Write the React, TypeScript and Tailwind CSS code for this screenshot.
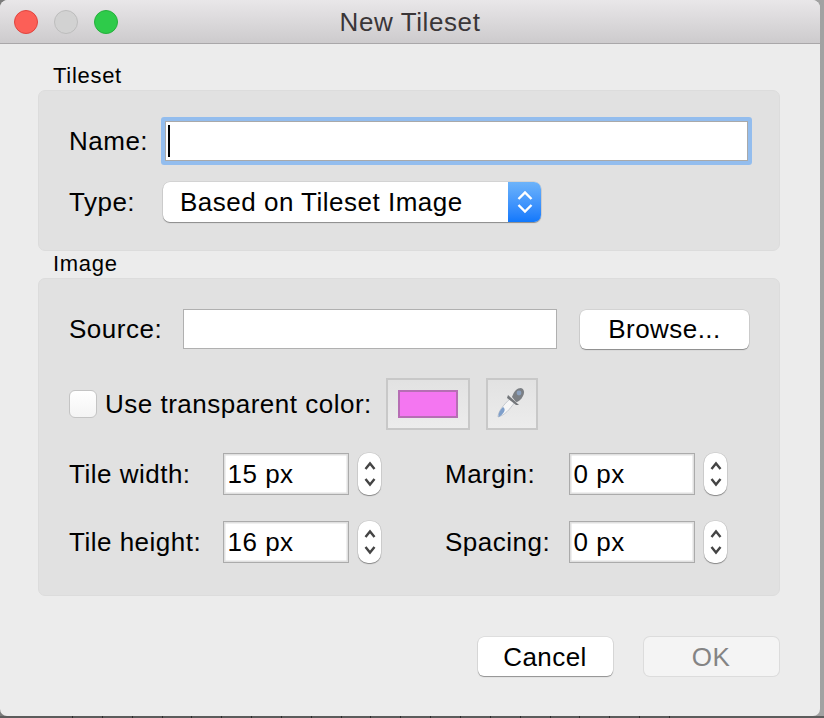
import React from "react";

const ctl = "shadow-[0_1px_1px_rgba(0,0,0,0.35),0_0_0_0.5px_rgba(0,0,0,0.12)]";
const txt = "text-[26px] tracking-[0.5px] text-black whitespace-nowrap pt-[1px]";
const group = "text-[22px] leading-[24px] tracking-[0.7px] text-black";
const ticks = Array.from({ length: 21 }, (_, i) => i);

function SelectChevrons() {
  return (
    <svg width={16} height={26} viewBox="0 0 16 26" fill="none" stroke="#fff" strokeWidth="2.4">
      <path d="M1.5 10 L8 3.5 L14.5 10" />
      <path d="M1.5 16 L8 22.5 L14.5 16" />
    </svg>
  );
}

function SpinChevrons() {
  return (
    <svg width={12} height={26} viewBox="0 0 12 26" fill="none" stroke="#444" strokeWidth="2.4">
      <path d="M1.5 8 L6 2.5 L10.5 8" />
      <path d="M1.5 18 L6 23.5 L10.5 18" />
    </svg>
  );
}

function SpinField({ value }: { value: string }) {
  return (
    <div className="flex items-center gap-[9px]">
      <div className={`w-[126px] h-[42px] border-[1.5px] border-[#ababab] bg-white shadow-[inset_0_0_0_1.5px_#e0e0e0] pl-[3.5px] flex items-center ${txt}`}>
        {value}
      </div>
      <div className={`w-[23px] h-[42px] rounded-[10px] bg-white flex items-center justify-center ${ctl}`}>
        <SpinChevrons />
      </div>
    </div>
  );
}

function Button({ label, w, disabled }: { label: string; w: string; disabled?: boolean }) {
  return (
    <div
      className={`${w} h-[39px] rounded-[6px] flex items-center justify-center text-[26px] tracking-[0.45px] pt-[1px] ${
        disabled
          ? "bg-[#f4f4f4] text-[#848484] shadow-[0_0_0_1px_#dcdcdc]"
          : `bg-white text-black ${ctl}`
      }`}
    >
      {label}
    </div>
  );
}

export default function App() {
  return (
    <div className="w-[824px] h-[718px] overflow-hidden bg-gradient-to-r from-[#7c7c7c] to-[#a2a2a2] font-['Liberation_Sans',sans-serif] relative">
      <div className="w-[820px] h-[716px] bg-[#ececec] rounded-t-[8px] rounded-b-[7px] overflow-hidden flex flex-col">
        <div className="h-[44px] shrink-0 border-b border-[#a9a7a9] bg-gradient-to-b from-[#e9e7e9] to-[#cdcbcd] flex items-center relative">
          <div className="flex gap-[16px] pl-[14px]">
            <div className="w-[24px] h-[24px] rounded-full bg-[#fc5f57] border border-[#e0443e]" />
            <div className="w-[24px] h-[24px] rounded-full bg-[#d2d2d2] border border-[#bdbdbd]" />
            <div className="w-[24px] h-[24px] rounded-full bg-[#2ecb4a] border border-[#25b03c]" />
          </div>
          <div className="absolute inset-0 flex items-center justify-center text-[26px] tracking-[0.6px] pt-[2px] text-[#3a3638]">New Tileset</div>
        </div>

        <div className="pl-[38px] w-[780px]">
          <div className={`pl-[15px] pt-[20px] h-[46px] ${group}`}>Tileset</div>
          <div className="h-[161px] w-[742px] bg-[#e1e1e1] rounded-[7px] border border-[#dcdcdc] pl-[30px] pt-[26px]">
            <div className="flex items-center h-[48px]">
              <div className={`w-[92px] ${txt}`}>Name:</div>
              <div className="w-[591px] h-[48px] rounded-[3px] bg-[#93bdee] p-[4px]">
                <div className="w-full h-full bg-white border border-[#a9a9a9] pl-[2px] py-[3px]">
                  <div className="w-[2px] h-full bg-black" />
                </div>
              </div>
            </div>
            <div className="flex items-center h-[40px] mt-[17px]">
              <div className={`w-[94px] ${txt}`}>Type:</div>
              <div className={`w-[378px] h-[40px] rounded-[7px] bg-white flex overflow-hidden ${ctl}`}>
                <div className={`flex-1 pl-[17px] flex items-center ${txt}`}>Based on Tileset Image</div>
                <div className="w-[33px] bg-gradient-to-b from-[#6cb3fa] to-[#0f78fc] flex items-center justify-center">
                  <SelectChevrons />
                </div>
              </div>
            </div>
          </div>

          <div className={`pl-[15px] pt-[1px] h-[27px] ${group}`}>Image</div>
          <div className="h-[318px] w-[742px] bg-[#e1e1e1] rounded-[7px] border border-[#dcdcdc] pl-[30px] pt-[30px]">
            <div className="flex items-center h-[40px]">
              <div className={`w-[114px] ${txt}`}>Source:</div>
              <div className="w-[374px] h-[40px] bg-white border border-[#b0b0b0]" />
              <div className="ml-[23px]">
                <Button label="Browse..." w="w-[169px]" />
              </div>
            </div>
            <div className="flex items-center h-[52px] mt-[29px]">
              <div className="w-[28px] h-[28px] rounded-[6px] bg-gradient-to-b from-white to-[#f4f4f4] border border-[#c4c4c4]" />
              <div className={`ml-[8px] w-[281px] ${txt}`}>Use transparent color:</div>
              <div className="w-[84px] h-[52px] border-2 border-[#c8c8c8] bg-gradient-to-b from-[#e2e2e2] to-[#ececec] flex items-center justify-center">
                <div className="w-[60px] h-[28px] bg-[#f476f1] border-2 border-[#b66eb4]" />
              </div>
              <div className="ml-[16px] w-[52px] h-[52px] border-2 border-[#c8c8c8] bg-gradient-to-b from-[#e2e2e2] to-[#ececec] flex items-center justify-center">
                <svg width="48" height="48" viewBox="0 0 48 48">
                  <path d="M10 37 C10 32 15 25 23 18 L27 22 C21 30 17 35 10 37 Z" fill="#f6f6f6" stroke="#a9b0ba" strokeWidth="0.6" />
                  <path d="M10.5 37 C10 33 12 30 15 27 C17 28 17 30 16 32 C14 35 12 36.5 10.5 37 Z" fill="#7f9fca" />
                  <path d="M20 15 L31 25 L28 25 L19 18 Z" fill="#73767a" />
                  <path d="M24 17 C26 11 29 8 33 8 C36 9 37 12 35 16 C33 20 30 22 28 22 Z" fill="#7b7f84" />
                  <circle cx="31" cy="13" r="2.4" fill="#8ba0bd" />
                </svg>
              </div>
            </div>
            <div className="grid grid-cols-[154px_222px_124px_1fr] items-center gap-y-[26px] mt-[23px]">
              <div className={txt}>Tile width:</div>
              <SpinField value="15 px" />
              <div className={txt}>Margin:</div>
              <SpinField value="0 px" />
              <div className={txt}>Tile height:</div>
              <SpinField value="16 px" />
              <div className={txt}>Spacing:</div>
              <SpinField value="0 px" />
            </div>
          </div>

          <div className="flex pl-[439.5px] gap-[31px] mt-[41px]">
            <Button label="Cancel" w="w-[135px]" />
            <Button label="OK" w="w-[135px]" disabled />
          </div>
        </div>
      </div>
      <div className="absolute left-0 bottom-0 w-full h-[2px] bg-[#5c5c5c] flex pl-[72px]">
        {ticks.map((i) => (
          <div key={i} className="w-[29.85px] shrink-0 h-[2px] border-l border-[#2c2c2c]" />
        ))}
      </div>
    </div>
  );
}
